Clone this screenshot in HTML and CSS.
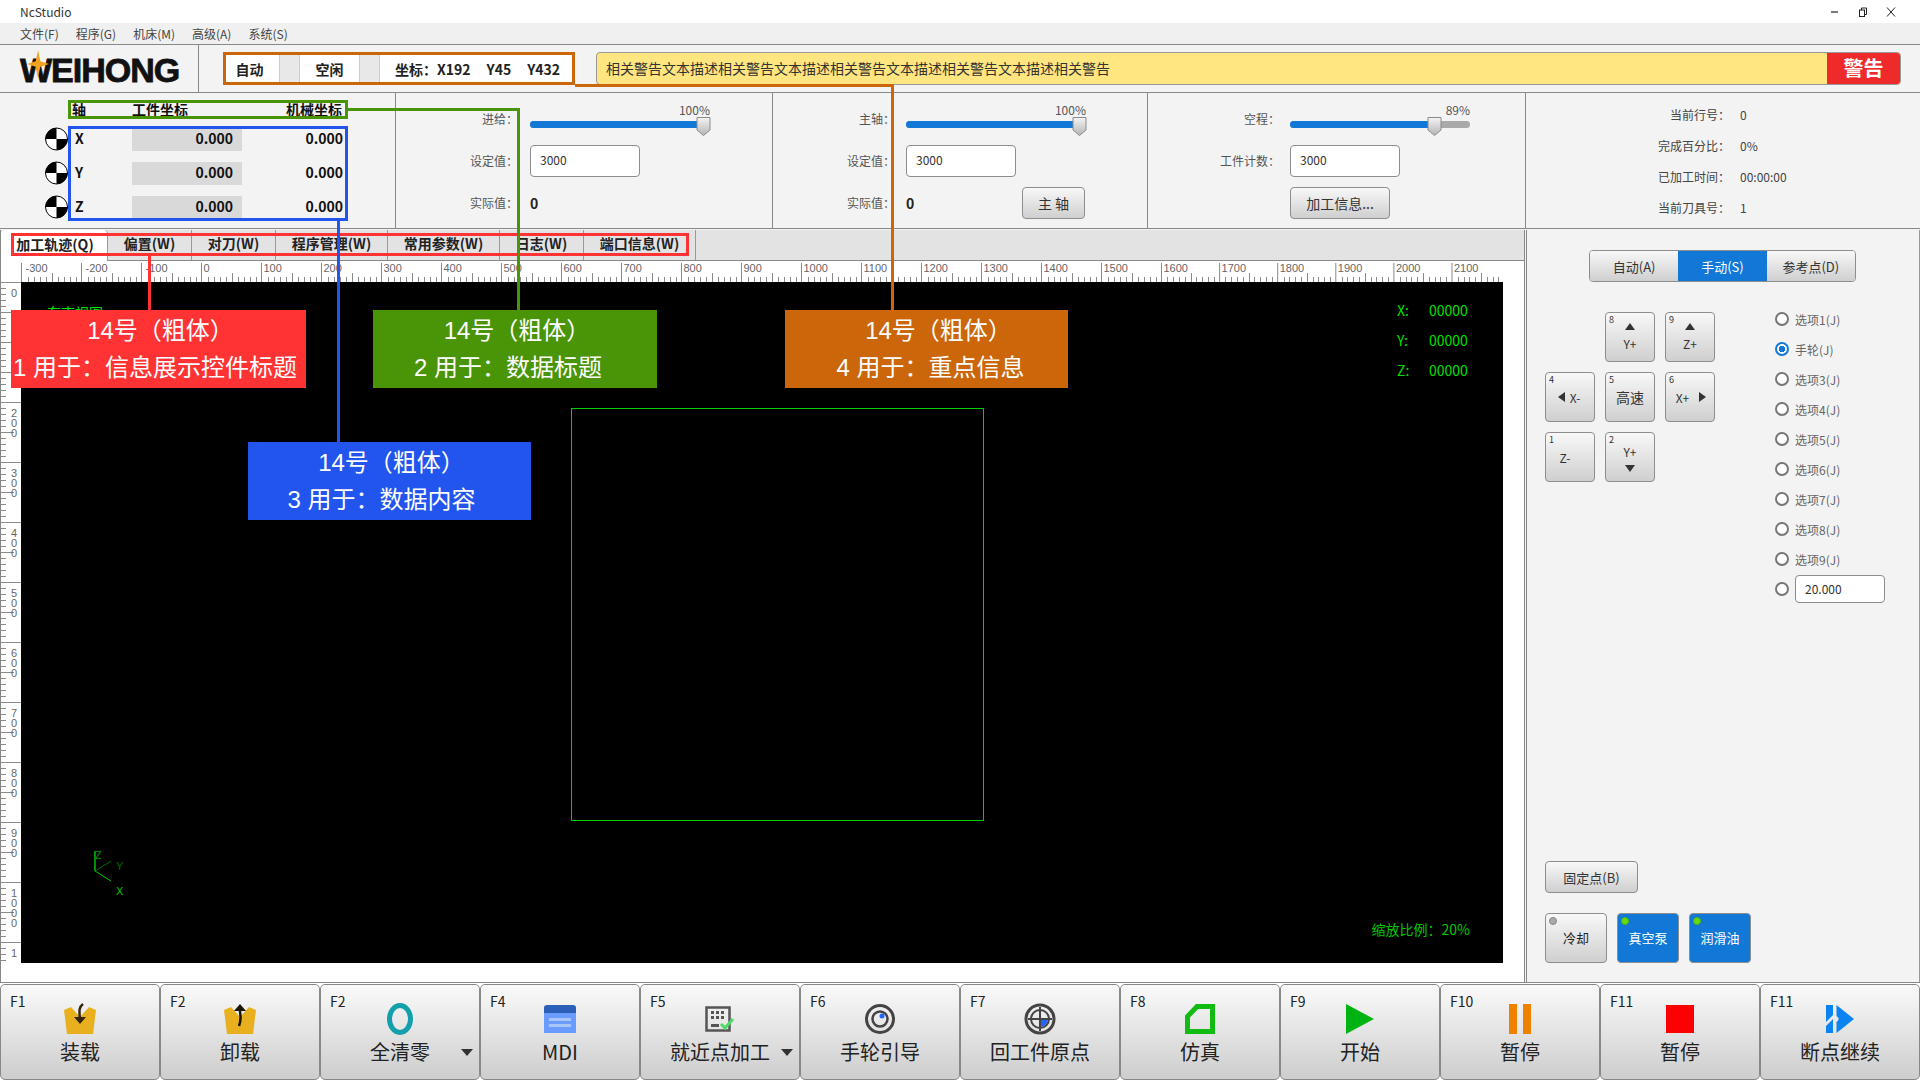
FILE: index.html
```html
<!DOCTYPE html>
<html lang="zh-CN">
<head>
    <meta charset="UTF-8">
    <title>NcStudio</title>
    <link rel="stylesheet" href="styles.css">
</head>
<body>

<header class="titlebar">
    <span>NcStudio</span>
    <div class="win-btns">
        <svg width="10" height="10" viewBox="0 0 10 10"><path d="M1 5h7" stroke="#222" stroke-width="1.2"/></svg>
        <svg width="10" height="10" viewBox="0 0 10 10" fill="none" stroke="#222"><rect x="1.5" y="3" width="5" height="6.500"/><path d="M3.500 3V1h5v6.500H6.500"/></svg>
        <svg width="10" height="10" viewBox="0 0 10 10"><path d="M1 0.500l8 9M9 0.500l-8 9" stroke="#222"/></svg>
    </div>
</header>

<nav class="menubar">
    <span>文件(F)</span><span>程序(G)</span><span>机床(M)</span><span>高级(A)</span><span>系统(S)</span>
</nav>

<section class="toolbar">
    <div class="logo">
        <span class="logo-text">WEIHONG</span>
        <svg class="logo-star" width="22" height="30" viewBox="0 0 24 30"><path d="M12 0l2.500 12L24 15l-9.500 3L12 30 9.500 18 0 15l9.500-3z" fill="#f5a31e"/></svg>
    </div>
    <div class="status-strip">
        <span class="seg seg-mode">自动</span>
        <span class="seg-gap"></span>
        <span class="seg seg-state">空闲</span>
        <span class="seg-gap"></span>
        <span class="seg seg-coord"><span>坐标：</span><span>X192</span><span>Y45</span><span>Y432</span></span>
    </div>
    <div class="warning">
        <span class="warning-text">相关警告文本描述相关警告文本描述相关警告文本描述相关警告文本描述相关警告</span>
        <span class="warning-tag">警告</span>
    </div>
</section>

<section class="info-row">
    <div class="panel-axis">
        <div class="axis-table">
            <span></span><b class="axis-h">轴</b><b class="axis-h axis-h-work">工件坐标</b><b class="axis-h axis-right">机械坐标</b>
            <svg class="zero-icon" width="23" height="24" viewBox="0 0 23 24"><use href="#zero"/></svg>
            <b class="axis-name">X</b><b class="axis-work">0.000</b><b class="axis-mach">0.000</b>
            <svg class="zero-icon" width="23" height="24" viewBox="0 0 23 24"><use href="#zero"/></svg>
            <b class="axis-name">Y</b><b class="axis-work">0.000</b><b class="axis-mach">0.000</b>
            <svg class="zero-icon" width="23" height="24" viewBox="0 0 23 24"><use href="#zero"/></svg>
            <b class="axis-name">Z</b><b class="axis-work">0.000</b><b class="axis-mach">0.000</b>
        </div>
    </div>

    <div class="panel-ctl panel-feed">
        <span class="ctl-label">进给：</span>
        <div class="slider"><span class="slider-val">100%</span><div class="track"><div class="fill" style="width:174px"><svg class="thumb" width="15" height="19" viewBox="0 0 15 19"><use href="#thumb"/></svg></div></div></div>
        <span class="ctl-label">设定值：</span>
        <div class="ctl-input input-feed">3000</div>
        <span class="ctl-label">实际值：</span>
        <b class="ctl-value">0</b>
    </div>

    <div class="panel-ctl panel-spindle">
        <span class="ctl-label">主轴：</span>
        <div class="slider"><span class="slider-val">100%</span><div class="track"><div class="fill" style="width:174px"><svg class="thumb" width="15" height="19" viewBox="0 0 15 19"><use href="#thumb"/></svg></div></div></div>
        <span class="ctl-label">设定值：</span>
        <div class="ctl-input input-feed">3000</div>
        <span class="ctl-label">实际值：</span>
        <div class="ctl-last"><b class="ctl-value">0</b><button class="btn btn-spindle">主 轴</button></div>
    </div>

    <div class="panel-ctl panel-travel">
        <span class="ctl-label">空程：</span>
        <div class="slider"><span class="slider-val">89%</span><div class="track"><div class="fill" style="width:145px"><svg class="thumb" width="15" height="19" viewBox="0 0 15 19"><use href="#thumb"/></svg></div></div></div>
        <span class="ctl-label">工件计数：</span>
        <div class="ctl-input input-feed">3000</div>
        <span></span>
        <button class="btn btn-info">加工信息...</button>
    </div>

    <div class="panel-stat">
        <span class="stat-label">当前行号：</span><span class="stat-val">0</span>
        <span class="stat-label">完成百分比：</span><span class="stat-val">0%</span>
        <span class="stat-label">已加工时间：</span><span class="stat-val">00:00:00</span>
        <span class="stat-label">当前刀具号：</span><span class="stat-val">1</span>
    </div>
</section>

<main class="main">
    <div class="viewer">
        <div class="tabs">
            <span class="tab tab-active">加工轨迹(Q)</span>
            <span class="tab tab-s">偏置(W)</span>
            <span class="tab tab-s">对刀(W)</span>
            <span class="tab tab-m">程序管理(W)</span>
            <span class="tab tab-m">常用参数(W)</span>
            <span class="tab tab-s">日志(W)</span>
            <span class="tab tab-m">端口信息(W)</span>
        </div>
        <div class="stage">
            <div class="ruler-corner"></div>
            <svg id="rulerTop" class="ruler-top" width="1482" height="21"></svg>
            <svg id="rulerLeft" class="ruler-left" width="21" height="681"></svg>
            <div class="canvas">
                <span class="view-name">东南视图</span>
                <div class="readout">
                    <span>X:</span><span>00000</span>
                    <span>Y:</span><span>00000</span>
                    <span>Z:</span><span>00000</span>
                </div>
                <div class="work-rect"></div>
                <svg class="axes" width="60" height="60" viewBox="0 0 60 60">
                    <path d="M12 24L28 14" stroke="#006a00" fill="none"/>
                    <path d="M12 24L28 34" stroke="#00c800" fill="none"/>
                    <path d="M12 24V4" stroke="#009000" stroke-width="2" fill="none"/>
                    <text x="12" y="12" class="axes-z">Z</text>
                    <text x="33" y="23" class="axes-y">Y</text>
                    <text x="33" y="48" class="axes-x">X</text>
                </svg>
                <span class="scale">缩放比例：20%</span>
            </div>
        </div>
    </div>

    <aside class="side">
        <div class="mode-seg">
            <span class="mode-btn">自动(A)</span>
            <span class="mode-btn mode-on">手动(S)</span>
            <span class="mode-btn">参考点(D)</span>
        </div>
        <div class="jog-row">
            <div class="jog-grid">
                <span class="jog jog-col2"><i>8</i><em class="tri-up"></em>Y+</span>
                <span class="jog"><i>9</i><em class="tri-up"></em>Z+</span>
                <span class="jog jog-h jog-xm"><i>4</i><em class="tri-left"></em>X-</span>
                <span class="jog jog-fast"><i>5</i>高速</span>
                <span class="jog jog-h jog-xp"><i>6</i>X+<em class="tri-right"></em></span>
                <span class="jog jog-zm"><i>1</i>Z-</span>
                <span class="jog"><i>2</i>Y+<em class="tri-down"></em></span>
            </div>
            <div class="radios">
                <label class="radio"><em></em>选项1(J)</label>
                <label class="radio radio-on"><em></em>手轮(J)</label>
                <label class="radio"><em></em>选项3(J)</label>
                <label class="radio"><em></em>选项4(J)</label>
                <label class="radio"><em></em>选项5(J)</label>
                <label class="radio"><em></em>选项6(J)</label>
                <label class="radio"><em></em>选项7(J)</label>
                <label class="radio"><em></em>选项8(J)</label>
                <label class="radio"><em></em>选项9(J)</label>
                <label class="radio"><em></em><span class="radio-input">20.000</span></label>
            </div>
        </div>
        <div class="side-bottom">
            <button class="btn btn-fixed">固定点(B)</button>
            <div class="toggles">
                <span class="toggle"><i></i>冷却</span>
                <span class="toggle toggle-on"><i></i>真空泵</span>
                <span class="toggle toggle-on"><i></i>润滑油</span>
            </div>
        </div>
    </aside>
</main>

<footer class="fkeys">
    <div class="fkey"><span class="fkey-no">F1</span>
        <svg width="32" height="30" viewBox="0 0 32 30"><path d="M0 6l7-3 9 10 9-10 7 3-3 24H3z" fill="#e8b01e"/><path d="M19 0c-4 3-4 6-3 16" stroke="#33260a" stroke-width="2.500" fill="none"/><path d="M10 13h12l-6 7z" fill="#33260a"/></svg>
        <span class="fkey-name">装载</span></div>
    <div class="fkey"><span class="fkey-no">F2</span>
        <svg width="32" height="30" viewBox="0 0 32 30"><path d="M0 6l7-3 9 10 9-10 7 3-3 24H3z" fill="#e8b01e"/><path d="M10 7l6-7 6 7z" fill="#1d1506"/><path d="M16 6c0 6 2 8-1 16" stroke="#1d1506" stroke-width="2.500" fill="none"/></svg>
        <span class="fkey-name">卸载</span></div>
    <div class="fkey"><span class="fkey-no">F2</span>
        <svg width="30" height="32" viewBox="0 0 30 32"><ellipse cx="15" cy="16" rx="10.500" ry="13.500" fill="none" stroke="#12a0ad" stroke-width="5"/></svg>
        <span class="fkey-name">全清零</span><em class="fkey-drop"></em></div>
    <div class="fkey"><span class="fkey-no">F4</span>
        <svg width="32" height="30" viewBox="0 0 32 30"><path d="M0 4q0-3 3-3h26q3 0 3 3v5H0z" fill="#2b5fb8"/><path d="M0 9h32v20H0z" fill="#6a9bff"/><path d="M5 14h22v3H5zM5 20h22v3H5z" fill="#a9c5fa"/></svg>
        <span class="fkey-name">MDI</span></div>
    <div class="fkey"><span class="fkey-no">F5</span>
        <svg width="30" height="30" viewBox="0 0 30 30"><path d="M1.500 3.500h23v23h-23z" fill="none" stroke="#555" stroke-width="2.500"/><path d="M6 7h3v3H6zM11 7h3v3h-3zM16 7h3v3h-3zM6 12h3v3H6zM11 12h3v3h-3zM16 12h3v3h-3zM6 20h8v3H6z" fill="#555"/><path d="M16 20l4 4 8-9" fill="none" stroke="#4cdc68" stroke-width="3"/></svg>
        <span class="fkey-name">就近点加工</span><em class="fkey-drop"></em></div>
    <div class="fkey"><span class="fkey-no">F6</span>
        <svg width="32" height="32" viewBox="0 0 32 32" fill="none" stroke="#444"><circle cx="16" cy="16" r="13.500" stroke-width="3"/><circle cx="16" cy="16" r="7.500" stroke-width="2.500"/><circle cx="18" cy="13" r="2.500" fill="#2266ff" stroke="none"/></svg>
        <span class="fkey-name">手轮引导</span></div>
    <div class="fkey"><span class="fkey-no">F7</span>
        <svg width="32" height="32" viewBox="0 0 32 32" fill="none" stroke="#444"><path d="M16 16h8a8 8 0 0 1-8 8z" fill="#2266ff" stroke="none"/><circle cx="16" cy="16" r="14" stroke-width="3"/><circle cx="16" cy="16" r="9" stroke-width="2"/><path d="M16 4v24M4 16h24" stroke-width="2"/></svg>
        <span class="fkey-name">回工件原点</span></div>
    <div class="fkey"><span class="fkey-no">F8</span>
        <svg width="30" height="30" viewBox="0 0 30 30"><path d="M12 2.500h15.500v25h-25v-15z" fill="none" stroke="#11bb11" stroke-width="5"/></svg>
        <span class="fkey-name">仿真</span></div>
    <div class="fkey"><span class="fkey-no">F9</span>
        <svg width="28" height="30" viewBox="0 0 28 30"><path d="M0 0l28 15L0 30z" fill="#00b312"/></svg>
        <span class="fkey-name">开始</span></div>
    <div class="fkey"><span class="fkey-no">F10</span>
        <svg width="22" height="30" viewBox="0 0 22 30"><path d="M0 0h8v30H0zM14 0h8v30h-8z" fill="#f08000"/></svg>
        <span class="fkey-name">暂停</span></div>
    <div class="fkey"><span class="fkey-no">F11</span>
        <svg width="28" height="30" viewBox="0 0 28 30"><path d="M0 1h28v28H0z" fill="#f00"/></svg>
        <span class="fkey-name">暂停</span></div>
    <div class="fkey"><span class="fkey-no">F11</span>
        <svg width="28" height="30" viewBox="0 0 28 30"><path d="M0 1h7v10l-7 7zM0 22l7-7v14H0zM10.500 1L28 15 10.500 29V18l2-2v-2l-2-2z" fill="#0a84f0"/></svg>
        <span class="fkey-name">断点继续</span></div>
</footer>

<!-- annotation layer -->
<div class="hl hl-red hl-tabs"></div>
<div class="hl hl-green hl-head"></div>
<div class="hl hl-blue hl-rows"></div>
<div class="lead lead-red"></div>
<div class="lead lead-green-h"></div>
<div class="lead lead-green-v"></div>
<div class="lead lead-blue"></div>
<div class="lead lead-orange-h"></div>
<div class="lead lead-orange-v"></div>
<div class="note note-red"><span>14号（粗体）</span><span>1 用于：信息展示控件标题</span></div>
<div class="note note-green"><span>14号（粗体）</span><span>2 用于：数据标题</span></div>
<div class="note note-blue"><span>14号（粗体）</span><span>3 用于：数据内容</span></div>
<div class="note note-orange"><span>14号（粗体）</span><span>4 用于：重点信息</span></div>

<svg class="defs" width="0" height="0">
    <defs>
        <g id="zero">
            <circle cx="11.500" cy="12" r="11" fill="#fff" stroke="#000"/>
            <path d="M11.500 12V1A11 11 0 0 0 0.500 12zM11.500 12V23A11 11 0 0 0 22.500 12z" fill="#000"/>
        </g>
        <linearGradient id="thumbFill" x1="0" y1="0" x2="0" y2="1">
            <stop offset="0" stop-color="#f4f4f4"/>
            <stop offset="1" stop-color="#b4b4b4"/>
        </linearGradient>
        <g id="thumb"><path d="M1 .5h13v12.500l-6.500 5.500L1 13z" fill="url(#thumbFill)" stroke="#8a8a8a"/></g>
    </defs>
</svg>

<script src="script.js"></script>
</body>
</html>
```

FILE: styles.css
```css
* {
    box-sizing: border-box;
}
html, body {
    margin: 0;
    padding: 0;
}
body {
    position: relative;
    width: 1920px;
    height: 1080px;
    overflow: hidden;
    display: flex;
    flex-direction: column;
    font-family: "Noto Sans CJK SC", "Noto Sans", sans-serif;
    font-size: 12px;
    color: #333;
    background: #f3f3f3;
}
button {
    font-family: inherit;
    padding: 0;
}
.defs {
    position: absolute;
}

/* title and menu */
.titlebar {
    height: 23px;
    flex: none;
    background: #fff;
    display: flex;
    align-items: center;
    justify-content: space-between;
    padding: 0 24px 0 20px;
    color: #333;
}
.win-btns {
    display: flex;
    gap: 18px;
}
.menubar {
    height: 22px;
    flex: none;
    background: #f0f0f0;
    border-bottom: 1px solid #888;
    display: flex;
    align-items: center;
    padding-left: 20px;
    gap: 17px;
    color: #444;
}

/* logo + status + warning */
.toolbar {
    height: 48px;
    flex: none;
    display: flex;
    align-items: flex-start;
    border-bottom: 1px solid #888;
}
.logo {
    position: relative;
    width: 199px;
    height: 47px;
    border-right: 1px solid #888;
    padding: 6px 0 0 20px;
}
.logo-text {
    font-family: "Liberation Sans", sans-serif;
    font-weight: bold;
    font-size: 34px;
    line-height: 38px;
    letter-spacing: -1px;
    color: #111;
    -webkit-text-stroke: 0.8px #111;
}
.logo-star {
    position: absolute;
    left: 27px;
    top: 4px;
}
.status-strip {
    margin: 7px 0 0 24px;
    width: 352px;
    height: 33px;
    border: 3px solid #cc660a;
    display: flex;
    font-weight: bold;
    font-size: 14px;
    color: #222;
}
.seg {
    background: #fff;
    display: flex;
    align-items: center;
    justify-content: center;
    height: 100%;
}
.seg-gap {
    width: 21px;
    background: #e8e8e8;
    border-left: 1px solid #ccc;
    border-right: 1px solid #ccc;
}
.seg-mode {
    width: 53px;
    padding-right: 6px;
}
.seg-state {
    width: 59px;
}
.seg-coord {
    flex: 1;
    justify-content: flex-start;
    padding-left: 15px;
    gap: 16px;
}
.seg-coord span:first-child {
    margin-right: -16px;
    width: 42px;
}
.warning {
    margin: 7px 19px 0 21px;
    flex: 1;
    height: 33px;
    border: 1px solid #999;
    border-radius: 4px;
    background: #ffe680;
    display: flex;
    overflow: hidden;
    font-size: 14px;
    color: #333;
}
.warning-text {
    flex: 1;
    padding-left: 9px;
    line-height: 30px;
}
.warning-tag {
    width: 73px;
    background: #ee2a2a;
    color: #fff;
    font-weight: bold;
    font-size: 20px;
    text-align: center;
    line-height: 30px;
}

/* info panels */
.info-row {
    height: 136px;
    flex: none;
    display: flex;
    border-bottom: 1px solid #888;
}
.panel-axis {
    width: 396px;
    border-right: 1px solid #888;
    padding: 7px 0 0 46px;
}
.axis-table {
    display: grid;
    grid-template-columns: 22px 64px 110px 106px;
    grid-template-rows: 17px 23px 23px 23px;
    row-gap: 11px;
    align-items: center;
    font-size: 14px;
    color: #111;
}
.axis-h {
    padding-left: 4px;
}
.axis-h-work {
    padding-left: 0;
}
.axis-right {
    text-align: right;
    padding-right: 6px;
}
.axis-name {
    padding-left: 7px;
    padding-bottom: 3px;
}
.axis-work {
    background: #d9d9d9;
    height: 23px;
    line-height: 20px;
    text-align: right;
    padding-right: 9px;
}
.axis-mach {
    text-align: right;
    padding-right: 5px;
    padding-bottom: 3px;
}
.zero-icon {
    display: block;
    margin: -2px 0 0 -1px;
}

.panel-ctl {
    border-right: 1px solid #888;
    display: grid;
    grid-template-rows: 32px 32px 32px;
    row-gap: 10px;
    padding-top: 10px;
    align-items: center;
}
.panel-feed {
    width: 377px;
    grid-template-columns: 122px 210px;
    column-gap: 12px;
}
.panel-spindle {
    width: 375px;
    grid-template-columns: 122px 210px;
    column-gap: 11px;
}
.panel-travel {
    width: 378px;
    grid-template-columns: 132px 210px;
    column-gap: 10px;
}
.ctl-label {
    text-align: right;
    color: #555;
    padding-bottom: 2px;
}
.slider {
    position: relative;
    width: 180px;
    height: 32px;
}
.slider-val {
    position: absolute;
    right: 0;
    top: 0;
    line-height: 14px;
    color: #555;
}
.track {
    position: absolute;
    left: 0;
    right: 0;
    top: 18px;
    height: 7px;
    border-radius: 4px;
    background: #a9a9a9;
}
.fill {
    position: relative;
    height: 100%;
    border-radius: 4px;
    background: #1278d8;
}
.thumb {
    position: absolute;
    right: -7px;
    top: -4px;
}
.ctl-input {
    height: 32px;
    border: 1px solid #8d8d8d;
    border-radius: 4px;
    background: #fff;
    line-height: 28px;
    padding-left: 9px;
    color: #333;
}
.input-feed {
    width: 110px;
}
.ctl-value {
    font-size: 14px;
    color: #222;
    line-height: 30px;
}
.ctl-last {
    display: flex;
    align-items: center;
    justify-content: space-between;
    width: 179px;
}
.btn {
    height: 32px;
    border: 1px solid #8d8d8d;
    border-radius: 4px;
    background: linear-gradient(#f8f8f8, #cfcfcf);
    color: #333;
    font-size: 13px;
}
.btn-spindle {
    width: 63px;
    font-size: 14px;
}
.btn-info {
    width: 100px;
    font-size: 14px;
}
.panel-stat {
    flex: 1;
    display: grid;
    grid-template-columns: 204px 1fr;
    grid-auto-rows: 31px;
    padding-top: 6px;
    align-items: center;
    column-gap: 10px;
    color: #444;
}
.stat-label {
    text-align: right;
}

/* viewer */
.main {
    height: 754px;
    flex: none;
    display: flex;
    padding-top: 1px;
    border-bottom: 1px solid #888;
}
.viewer {
    width: 1525px;
    background: #fff;
    border: solid #888;
    border-width: 0 1px 0 1px;
}
.tabs {
    height: 31px;
    display: flex;
    background: #e3e3e3;
    border-bottom: 1px solid #888;
    font-weight: bold;
    font-size: 14px;
    line-height: 18px;
    color: #222;
}
.tab {
    display: flex;
    align-items: center;
    justify-content: center;
    border-right: 1px solid #999;
    padding-bottom: 4px;
}
.tab-active {
    width: 107px;
    background: #fff;
    margin-bottom: -1px;
    border-radius: 4px 4px 0 0;
    padding-left: 2px;
}
.tab-s {
    width: 84px;
}
.tab-m {
    width: 112px;
}
.stage {
    display: grid;
    grid-template-columns: 20px 1482px;
    grid-template-rows: 21px 681px;
}
.ruler-top, .ruler-left {
    display: block;
}
.ruler-top text, .ruler-left text {
    font-family: "Liberation Sans", sans-serif;
    font-size: 11px;
    fill: #666;
}
.canvas {
    position: relative;
    background: #000;
    color: #00e000;
    font-size: 14px;
}
.view-name {
    position: absolute;
    left: 26px;
    top: 20px;
}
.readout {
    position: absolute;
    left: 1376px;
    top: 13px;
    display: grid;
    grid-template-columns: 32px auto;
    grid-auto-rows: 30px;
    align-items: center;
    line-height: 24px;
}
.work-rect {
    position: absolute;
    left: 550px;
    top: 126px;
    width: 413px;
    height: 413px;
    border: 1px solid #00d000;
}
.axes {
    position: absolute;
    left: 62px;
    top: 565px;
}
.axes text {
    font-family: "Liberation Sans", sans-serif;
    font-size: 11px;
}
.axes-z {
    fill: #009000;
}
.axes-y {
    fill: #006a00;
}
.axes-x {
    fill: #00c800;
}
.scale {
    position: absolute;
    right: 33px;
    top: 637px;
    color: #00c800;
}

/* right side */
.side {
    flex: 1;
    margin-left: 1px;
    border-left: 1px solid #888;
    border-right: 1px solid #999;
    padding: 20px 0 19px 18px;
    display: flex;
    flex-direction: column;
    background: #f3f3f3;
}
.mode-seg {
    display: flex;
    width: 267px;
    height: 32px;
    margin-left: 44px;
    border: 1px solid #8d8d8d;
    border-radius: 4px;
    overflow: hidden;
    font-size: 13px;
}
.mode-btn {
    flex: 1;
    display: flex;
    align-items: center;
    justify-content: center;
    background: linear-gradient(#f8f8f8, #cfcfcf);
    color: #333;
}
.mode-on {
    background: #1278d8;
    color: #fff;
}
.jog-row {
    display: flex;
    margin-top: 22px;
    align-items: flex-start;
}
.jog-grid {
    margin-top: 8px;
    display: grid;
    grid-template-columns: repeat(3, 50px);
    grid-auto-rows: 50px;
    gap: 10px;
}
.jog {
    position: relative;
    display: flex;
    flex-direction: column;
    align-items: center;
    justify-content: center;
    gap: 5px;
    border: 1px solid #8d8d8d;
    border-radius: 4px;
    background: linear-gradient(#f8f8f8, #cfcfcf);
    color: #333;
}
.jog i {
    position: absolute;
    left: 3px;
    top: 1px;
    font-style: normal;
    font-size: 9px;
    line-height: 12px;
}
.jog-col2 {
    grid-column: 2;
}
.jog-h {
    flex-direction: row;
}
.jog-xm {
    gap: 5px;
    padding-right: 2px;
}
.jog-xp {
    gap: 10px;
    padding-left: 2px;
}
.jog-fast {
    font-size: 14px;
}
.jog-zm {
    padding-right: 10px;
}
.tri-up, .tri-down {
    width: 0;
    height: 0;
    border-left: 5.5px solid transparent;
    border-right: 5.5px solid transparent;
}
.tri-up {
    border-bottom: 7px solid #333;
}
.tri-down {
    border-top: 7px solid #333;
}
.tri-left, .tri-right {
    width: 0;
    height: 0;
    border-top: 5.5px solid transparent;
    border-bottom: 5.5px solid transparent;
}
.tri-left {
    border-right: 7px solid #333;
}
.tri-right {
    border-left: 7px solid #333;
}
.radios {
    margin-left: 60px;
}
.radio {
    display: flex;
    align-items: center;
    gap: 6px;
    height: 30px;
    color: #666;
}
.radio em {
    width: 14px;
    height: 14px;
    border-radius: 50%;
    border: 2px solid #777;
    background: #fff;
    flex: none;
}
.radio-on em {
    border-color: #1278d8;
    background: radial-gradient(circle, #1278d8 0 3px, #fff 3.5px);
}
.radio-input {
    width: 90px;
    height: 28px;
    border: 1px solid #8d8d8d;
    border-radius: 4px;
    background: #fff;
    line-height: 26px;
    padding-left: 9px;
    color: #333;
}
.side-bottom {
    margin-top: auto;
    display: flex;
    flex-direction: column;
    align-items: flex-start;
    gap: 20px;
}
.btn-fixed {
    width: 93px;
}
.toggles {
    display: flex;
    gap: 10px;
}
.toggle {
    position: relative;
    width: 62px;
    height: 50px;
    display: flex;
    align-items: center;
    justify-content: center;
    border: 1px solid #8d8d8d;
    border-radius: 4px;
    background: linear-gradient(#f8f8f8, #cfcfcf);
    font-size: 13px;
    color: #222;
    padding-bottom: 2px;
}
.toggle i {
    position: absolute;
    left: 3px;
    top: 3px;
    width: 8px;
    height: 8px;
    border-radius: 50%;
    background: #aaa;
    border: 1px solid #888;
}
.toggle-on {
    background: #1278d8;
    color: #fff;
}
.toggle-on i {
    background: #66dd11;
    border-color: #55b011;
}

/* function keys */
.fkeys {
    flex: 1;
    display: flex;
    padding-top: 1px;
    background: #fff;
}
.fkey {
    position: relative;
    width: 160px;
    display: flex;
    flex-direction: column;
    align-items: center;
    padding-top: 18px;
    border: 1px solid #888;
    border-radius: 5px;
    background: linear-gradient(#fafafa, #cdcdcd);
}
.fkey svg {
    display: block;
    height: 32px;
}
.fkey-no {
    position: absolute;
    left: 9px;
    top: 6px;
    font-size: 14px;
    line-height: 20px;
    color: #222;
}
.fkey-name {
    font-size: 20px;
    line-height: 28px;
    margin-top: 3px;
    color: #222;
}
.fkey-drop {
    position: absolute;
    right: 6px;
    top: 64px;
    width: 0;
    height: 0;
    border-left: 6px solid transparent;
    border-right: 6px solid transparent;
    border-top: 7px solid #333;
}

/* annotation layer */
.hl {
    position: absolute;
    border: 3px solid;
}
.hl-red {
    border-color: #ff3333;
}
.hl-green {
    border-color: #4a9408;
}
.hl-blue {
    border-color: #2255ee;
}
.hl-tabs {
    left: 11px;
    top: 233px;
    width: 678px;
    height: 23px;
}
.hl-head {
    left: 68px;
    top: 100px;
    width: 280px;
    height: 19px;
}
.hl-rows {
    left: 68px;
    top: 126px;
    width: 280px;
    height: 95px;
}
.lead {
    position: absolute;
}
.lead-red {
    left: 148px;
    top: 255px;
    width: 3px;
    height: 55px;
    background: #ff3333;
}
.lead-green-h {
    left: 348px;
    top: 108px;
    width: 172px;
    height: 3px;
    background: #4a9408;
}
.lead-green-v {
    left: 517px;
    top: 108px;
    width: 3px;
    height: 202px;
    background: #4a9408;
}
.lead-blue {
    left: 337px;
    top: 220px;
    width: 3px;
    height: 222px;
    background: #2255ee;
}
.lead-orange-h {
    left: 575px;
    top: 84px;
    width: 319px;
    height: 3px;
    background: #cc660a;
}
.lead-orange-v {
    left: 891px;
    top: 84px;
    width: 3px;
    height: 226px;
    background: #cc660a;
}
.note {
    position: absolute;
    width: 283px;
    height: 78px;
    display: flex;
    flex-direction: column;
    align-items: center;
    justify-content: center;
    gap: 5px;
    font-family: "Liberation Sans", "Noto Sans CJK SC", sans-serif;
    font-size: 24px;
    line-height: 32px;
    color: #fff;
}
.note span:first-child {
    padding-left: 4px;
}
.note-red {
    left: 11px;
    top: 310px;
    width: 295px;
    background: #ff3333;
}
.note-red span:last-child {
    padding-right: 7px;
}
.note-green {
    left: 373px;
    top: 310px;
    width: 284px;
    background: #4a9408;
}
.note-green span:last-child {
    padding-right: 14px;
}
.note-blue {
    left: 248px;
    top: 442px;
    background: #2255ee;
}
.note-blue span:last-child {
    padding-right: 16px;
}
.note-orange {
    left: 785px;
    top: 310px;
    background: #cc660a;
}
.note-orange span:first-child {
    padding-left: 24px;
}
.note-orange span:last-child {
    padding-left: 8px;
}
```

FILE: script.js
```js
// draws the two rulers around the canvas
const NS = 'http://www.w3.org/2000/svg';

function addLine(svg, x1, y1, x2, y2) {
    const l = document.createElementNS(NS, 'line');
    l.setAttribute('x1', x1);
    l.setAttribute('y1', y1);
    l.setAttribute('x2', x2);
    l.setAttribute('y2', y2);
    l.setAttribute('stroke', '#8a8a8a');
    svg.appendChild(l);
}

function addText(svg, x, y, str) {
    const t = document.createElementNS(NS, 'text');
    t.setAttribute('x', x);
    t.setAttribute('y', y);
    t.textContent = str;
    svg.appendChild(t);
}

function drawTop() {
    const svg = document.getElementById('rulerTop');
    let x = 0.5;
    for (let v = -300; v <= 2100; v += 100) {
        const step = v < 1600 ? 60 : 58.1;
        addLine(svg, x, 2, x, 21);
        addText(svg, x + (v < 0 ? 4 : 2), 11, String(v));
        for (let i = 1; i < 10; i++) {
            const px = Math.round(x + step * i / 10) + 0.5;
            addLine(svg, px, i === 5 ? 12 : 16, px, 21);
        }
        x += step;
    }
}

function drawLeft() {
    const svg = document.getElementById('rulerLeft');
    for (let i = 0; i <= 11; i++) {
        const y = i * 60 + 0.5;
        addLine(svg, 0, y, 21, y);
        for (let k = 1; k < 10; k++) {
            const py = y + k * 6;
            addLine(svg, 0, py, k === 5 ? 13 : 5, py);
        }
        String(i * 100).split('').forEach(function (d, n) {
            const ty = y + 14 + n * 10;
            if (ty < 680) addText(svg, 10, ty, d);
        });
    }
}

drawTop();
drawLeft();
```
